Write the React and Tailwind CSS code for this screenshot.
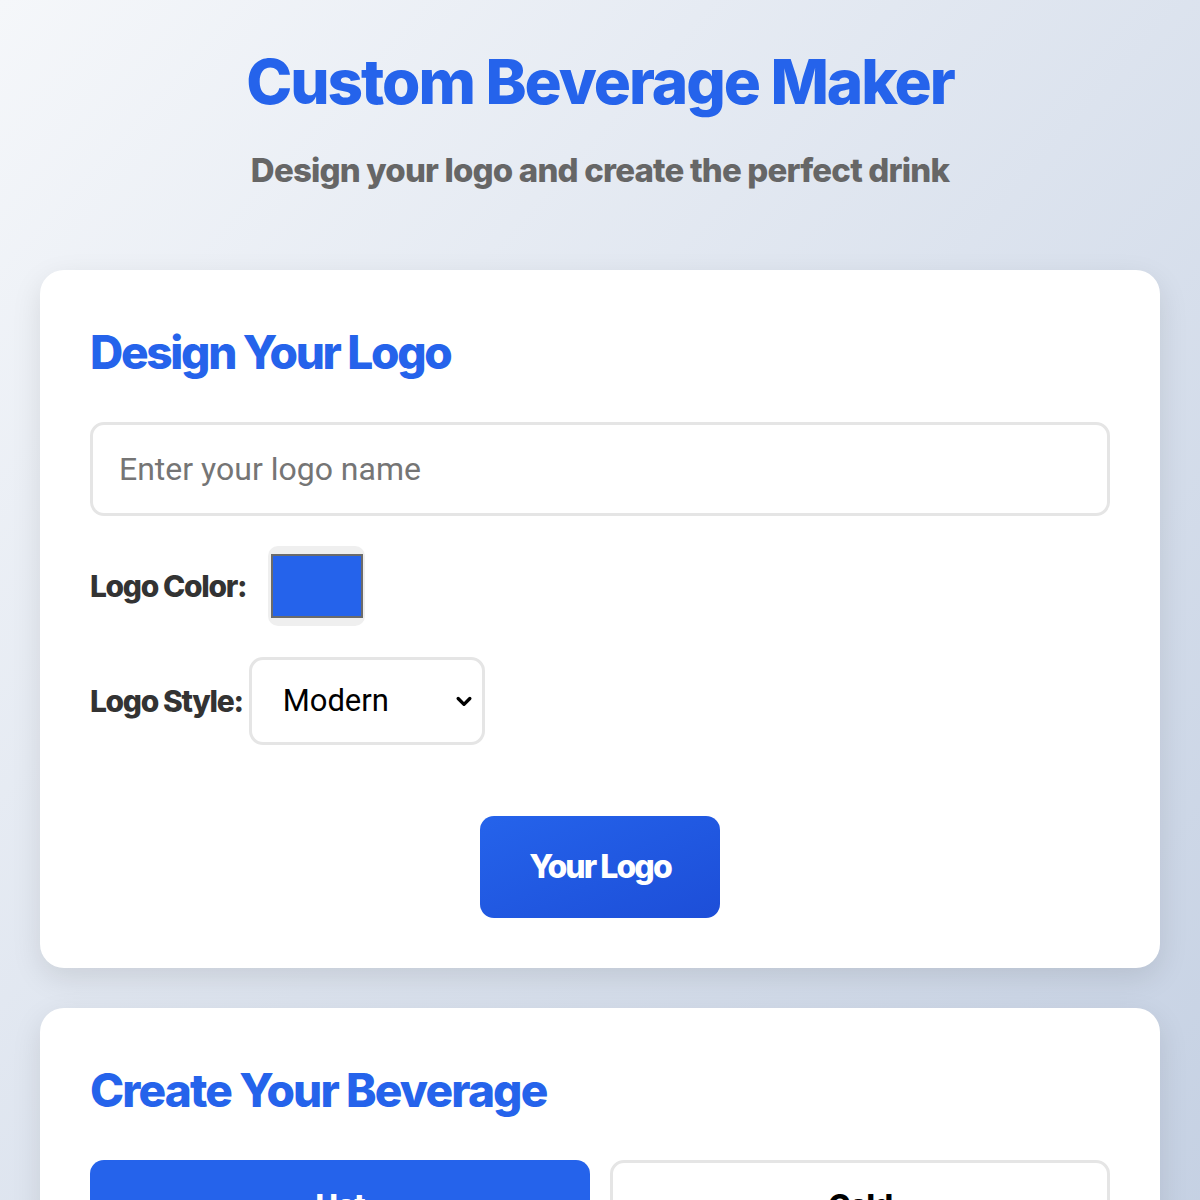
import { useState } from "react";

const display = "font-['Inter','Noto_Sans',sans-serif] font-extrabold";

function App() {
  const [logoName, setLogoName] = useState("");
  const [style, setStyle] = useState("Modern");
  const [temp, setTemp] = useState("Hot");

  return (
    <div className="min-h-[1200px] bg-gradient-to-br from-[#f5f7fa] to-[#c3cfe2] px-10 pt-[46px] pb-10 font-['Roboto',sans-serif]">
      <header className="text-center">
        <h1 className={`${display} text-[62px] leading-[72px] tracking-[-0.033em] text-[#2563eb]`}>
          Custom Beverage Maker
        </h1>
        <p className={`${display} font-bold mt-[32px] text-[33px] leading-[40px] tracking-[-0.025em] text-[#666666]`}>
          Design your logo and create the perfect drink
        </p>
      </header>

      <section className="mt-[80px] bg-white rounded-[24px] px-[50px] pt-[52px] pb-[50px] shadow-[0_10px_30px_rgba(0,0,0,0.1)]">
        <h2 className={`${display} text-[46px] leading-[60px] tracking-[-0.05em] text-[#2563eb]`}>
          Design Your Logo
        </h2>
        <input
          className="mt-[40px] w-full h-[94px] px-[26px] border-[3px] border-[#e5e5e5] rounded-[14px] text-[32px] text-[#333] placeholder:text-[#757575] focus:outline-none"
          placeholder="Enter your logo name"
          value={logoName}
          onChange={(e) => setLogoName(e.target.value)}
        />
        <div className="mt-[30px] flex items-center">
          <label className={`${display} font-bold text-[30px] tracking-[-0.045em] text-[#333] mr-[22px]`}>
            Logo Color:
          </label>
          <div className="w-[97px] h-[80px] bg-[#efefef] rounded-[10px] flex items-center justify-center">
            <div className="w-[92px] h-[64px] bg-[#2563eb] border-2 border-[#6b6b6b]" />
          </div>
        </div>
        <div className="mt-[31px] flex items-center">
          <label className={`${display} font-bold text-[30px] tracking-[-0.045em] text-[#333] mr-[6px]`}>
            Logo Style:
          </label>
          <div className="relative">
            <select
              className="appearance-none w-[236px] h-[88px] pl-[31px] pr-10 border-[3px] border-[#e5e5e5] rounded-[14px] bg-white text-[31px] text-black focus:outline-none"
              value={style}
              onChange={(e) => setStyle(e.target.value)}
            >
              <option>Modern</option>
              <option>Classic</option>
              <option>Playful</option>
            </select>
            <svg className="absolute right-[11px] top-1/2 -translate-y-1/2 pointer-events-none" width="20" height="20" viewBox="0 0 24 24" fill="none" stroke="black" strokeWidth="4" strokeLinecap="round" strokeLinejoin="round">
              <path d="M5 9l7 7 7-7" />
            </svg>
          </div>
        </div>
        <div className="mt-[71px] flex justify-center">
          <div className={`${display} w-[240px] h-[102px] rounded-[14px] bg-gradient-to-br from-[#2563eb] to-[#1d4ed8] text-white text-[32px] tracking-[-0.06em] flex items-center justify-center`}>
            {logoName || "Your Logo"}
          </div>
        </div>
      </section>

      <section className="mt-[40px] bg-white rounded-[24px] px-[50px] pt-[52px] pb-[50px] shadow-[0_10px_30px_rgba(0,0,0,0.1)]">
        <h2 className={`${display} text-[46px] leading-[60px] tracking-[-0.04em] text-[#2563eb]`}>
          Create Your Beverage
        </h2>
        <div className="mt-[40px] grid grid-cols-2 gap-5">
          {["Hot", "Cold"].map((t) => (
            <button
              key={t}
              onClick={() => setTemp(t)}
              className={`${display} font-bold h-[90px] rounded-[14px] text-[30px] tracking-[-0.04em] ${
                temp === t
                  ? "bg-[#2563eb] text-white"
                  : "bg-white text-black border-[3px] border-[#e5e5e5]"
              }`}
            >
              {t}
            </button>
          ))}
        </div>
      </section>
    </div>
  );
}

export default App;
